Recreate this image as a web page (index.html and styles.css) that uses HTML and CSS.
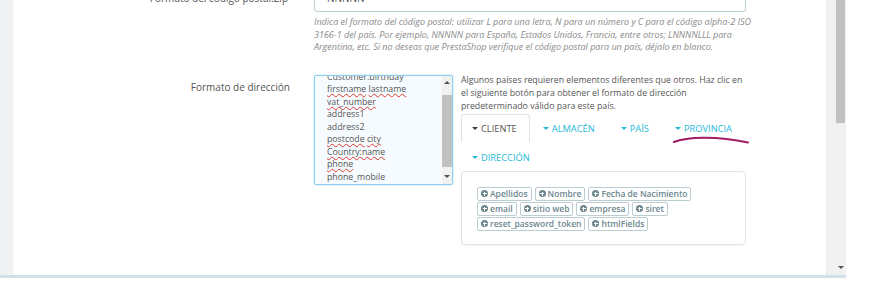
FILE: index.html
```html
<!DOCTYPE html>
<html lang="es">
<head>
	<meta charset="UTF-8">
	<title>Formato de dirección</title>
	<link rel="stylesheet" href="styles.css">
</head>
<body>
	<div class="screen">
		<div class="frame">
			<div class="side"></div>
			<div class="page">
				<div class="form">
					<!-- código postal -->
					<div class="row">
						<label class="lbl">Formato del código postal:Zip</label>
						<div class="field">
							<div class="input">NNNNN</div>
							<p class="help">Indica el formato del código postal: utilizar L para una letra, N para un número y C para el código alpha-2 ISO<br>3166-1 del país. Por ejemplo, NNNNN para España, Estados Unidos, Francia, entre otros; LNNNNLLL para<br>Argentina, etc. Si no deseas que PrestaShop verifique el código postal para un país, déjalo en blanco.</p>
						</div>
					</div>
					<!-- formato de dirección -->
					<div class="row row-addr">
						<label class="lbl">Formato de dirección</label>
						<div class="field addr">
							<div class="textarea">
								<div class="lines">
									<div>Customer:birthday</div>
									<div><span class="typo">firstname</span> <span class="typo">lastname</span></div>
									<div><span class="typo">vat_number</span></div>
									<div>address1</div>
									<div>address2</div>
									<div><span class="typo">postcode</span> <span class="typo">city</span></div>
									<div><span class="typo">Country:name</span></div>
									<div><span class="typo">phone</span></div>
									<div>phone_mobile</div>
								</div>
								<div class="ta-scroll">
									<span class="ta-up"></span>
									<div class="ta-thumb"></div>
									<span class="ta-down"></span>
								</div>
							</div>
							<div class="layout-help">
								<p class="info">Algunos países requieren elementos diferentes que otros. Haz clic en<br>el siguiente botón para obtener el formato de dirección<br>predeterminado válido para este país.</p>
								<ul class="tabs">
									<li class="tab active"><span class="caret"></span>Cliente</li>
									<li class="tab"><span class="caret"></span>Almacén</li>
									<li class="tab"><span class="caret"></span>País</li>
									<li class="tab"><span class="caret"></span>Provincia</li>
									<li class="tab"><span class="caret"></span>Dirección</li>
								</ul>
								<div class="tab-panel">
									<div class="btn-row">
										<span class="btn"><i class="plus"></i>Apellidos</span>
										<span class="btn"><i class="plus"></i>Nombre</span>
										<span class="btn"><i class="plus"></i>Fecha de Nacimiento</span>
									</div>
									<div class="btn-row">
										<span class="btn"><i class="plus"></i>email</span>
										<span class="btn"><i class="plus"></i>sitio web</span>
										<span class="btn"><i class="plus"></i>empresa</span>
										<span class="btn"><i class="plus"></i>siret</span>
									</div>
									<div class="btn-row">
										<span class="btn"><i class="plus"></i>reset_password_token</span>
										<span class="btn"><i class="plus"></i>htmlFields</span>
									</div>
								</div>
							</div>
						</div>
					</div>
				</div>
				<!-- marca a mano bajo PROVINCIA -->
				<svg class="scribble" width="80" height="12" viewBox="0 0 80 12">
					<path d="M2 8 C 14 3, 44 1.5, 76 8.5" fill="none" stroke="#a01c63" stroke-width="2" stroke-linecap="round"/>
				</svg>
			</div>
			<div class="side-r"></div>
			<div class="vscroll">
				<div class="thumb"></div>
				<span class="v-down"></span>
			</div>
		</div>
		<div class="bar"></div>
	</div>
</body>
</html>
```

FILE: styles.css
```css
*{
	box-sizing: border-box;
}
body{
	margin: 0;
	background: #fff;
	font-family: "Open Sans", "Liberation Sans", sans-serif;
	color: #555;
}
/*marco*/
.screen{
	width: 846px;
}
.frame{
	display: flex;
	height: 275px;
}
.side{
	width: 14px;
	background: #eff1f2;
	border-right: 1px solid #f8f9f9;
}
.page{
	flex: 1;
	position: relative;
	overflow: hidden;
	background: #fff;
}
.side-r{
	width: 10px;
	background: #f0f1f2;
	border-left: 1px solid #e8eaeb;
}
.vscroll{
	position: relative;
	width: 10px;
	background: #f1f1f1;
}
.thumb{
	width: 9px;
	height: 123px;
	background: #c1c1c1;
}
.v-down{
	position: absolute;
	left: 2px;
	top: 266px;
	border-left: 3px solid transparent;
	border-right: 3px solid transparent;
	border-top: 3px solid #505050;
}
.bar{
	height: 3px;
	background: #cfe1e6;
}
/*formulario*/
.form{
	margin-top: -14px;
}
.row{
	display: grid;
	grid-template-columns: 276px 432px;
	column-gap: 24px;
}
.lbl{
	text-align: right;
	font-size: 10px;
	line-height: 13px;
	padding-top: 6px;
	color: #555;
}
.row:first-child .lbl{
	padding-top: 5.5px;
	padding-right: 2px;
}
.input{
	height: 26px;
	border: 1px solid #bbcdd2;
	border-radius: 3px;
	padding: 5px 12px 0;
	font-size: 10px;
	line-height: 13px;
	color: #555;
}
.help{
	margin: 4px 0 0;
	font-size: 9px;
	font-style: italic;
	line-height: 12.5px;
	color: #8a8a8a;
	white-space: nowrap;
}
.row-addr{
	margin-top: 21px;
}
.addr{
	display: flex;
	gap: 8px;
	align-items: flex-start;
}
/*textarea*/
.textarea{
	position: relative;
	width: 139px;
	height: 110px;
	flex: none;
	border: 1px solid #8fd0ec;
	border-radius: 2px;
	background: #f5fbfe;
	box-shadow: 0 0 2px rgba(102, 175, 233, .5);
	overflow: hidden;
}
.lines{
	margin-top: -5px;
	padding-left: 12px;
	font-size: 8.75px;
	line-height: 12.5px;
	color: #555;
}
.typo{
	text-decoration: underline wavy #e0392f;
	text-decoration-thickness: 1px;
	text-decoration-skip-ink: none;
	text-underline-offset: 1px;
}
.ta-scroll{
	position: absolute;
	top: 0;
	right: 0;
	width: 10px;
	height: 100%;
	background: #f1f1f1;
}
.ta-thumb{
	position: absolute;
	top: 19px;
	left: 0;
	width: 10px;
	height: 72px;
	background: #c1c1c1;
}
.ta-up,
.ta-down{
	position: absolute;
	left: 2px;
	border-left: 3px solid transparent;
	border-right: 3px solid transparent;
}
.ta-up{
	top: 5px;
	border-bottom: 3px solid #505050;
}
.ta-down{
	bottom: 6px;
	border-top: 3px solid #505050;
}
/*ayuda a la derecha*/
.layout-help{
	width: 285px;
	flex: none;
}
.info{
	margin: -1px 0 0;
	font-size: 8.75px;
	line-height: 13px;
	color: #555;
	white-space: nowrap;
}
.tabs{
	display: flex;
	flex-wrap: wrap;
	row-gap: 1px;
	width: 300px;
	list-style: none;
	margin: 1px 0 0;
	padding: 0;
}
.tab{
	height: 28px;
	line-height: 27px;
	padding: 0 12px 0 10px;
	margin-right: 2px;
	border: 1px solid transparent;
	border-bottom: 0;
	font-size: 9.3px;
	text-transform: uppercase;
	color: #25b9d7;
}
.tab.active{
	border-color: #dbe6e9;
	border-radius: 3px 3px 0 0;
	color: #555;
}
.caret{
	display: inline-block;
	vertical-align: middle;
	margin: -2px 3px 0 0;
	border-left: 3px solid transparent;
	border-right: 3px solid transparent;
	border-top: 3px solid #25b9d7;
}
.active .caret{
	border-top-color: #363a41;
}
.tab-panel{
	height: 74px;
	border: 1px solid #dde4e6;
	border-radius: 4px;
	padding: 15px;
	box-shadow: 0 1px 1px rgba(0, 0, 0, .03);
}
.btn-row{
	display: flex;
	gap: 3px;
	margin-bottom: 1px;
}
.btn{
	display: inline-flex;
	align-items: center;
	height: 14px;
	padding: 0 3px 0 3px;
	border: 1px solid #bbcdd2;
	border-radius: 2px;
	font-size: 8.5px;
	font-weight: 600;
	color: #6c868e;
	white-space: nowrap;
}
.plus{
	position: relative;
	width: 7px;
	height: 7px;
	margin-right: 2px;
	border-radius: 50%;
	background: #6c868e;
}
.plus::before,
.plus::after{
	content: "";
	position: absolute;
	background: #fff;
}
.plus::before{
	left: 1.5px;
	top: 3px;
	width: 4px;
	height: 1px;
}
.plus::after{
	left: 3px;
	top: 1.5px;
	width: 1px;
	height: 4px;
}
/*marca*/
.scribble{
	position: absolute;
	left: 658px;
	top: 134px;
}
```
